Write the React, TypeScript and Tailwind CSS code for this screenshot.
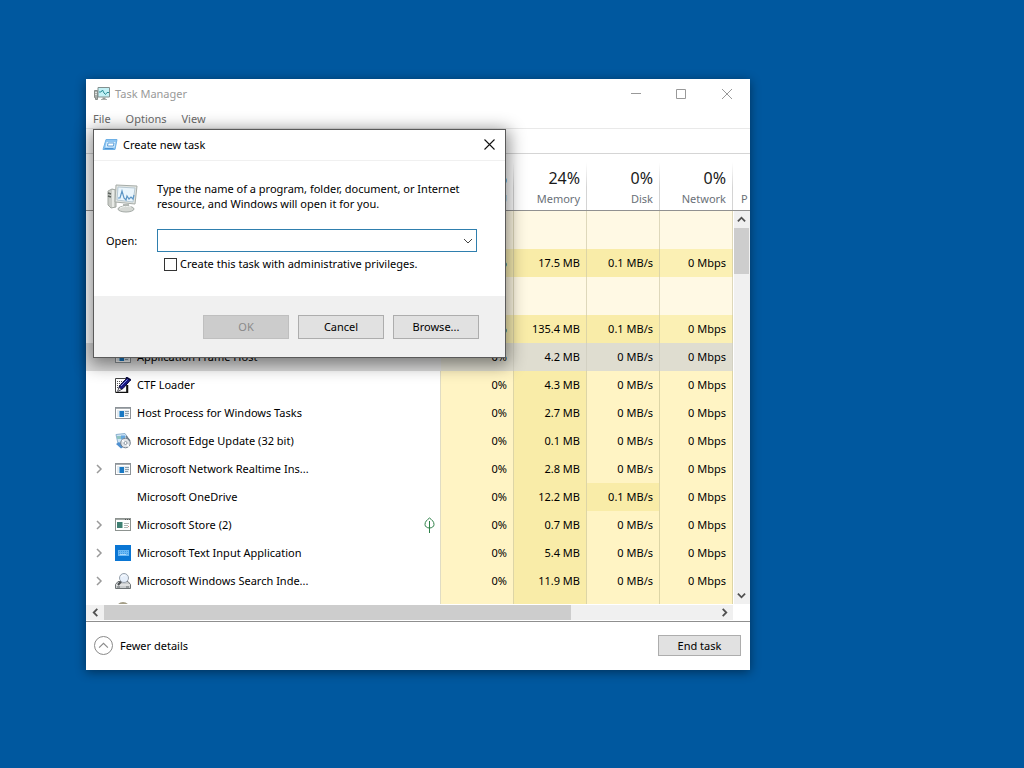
import { useState } from "react";
import type { ReactNode } from "react";

type Heat = "low" | "mid" | "high";

type Process = {
  id: string;
  name?: string;
  icon?: ReactNode;
  expandable?: boolean;
  suspended?: boolean;
  selected?: boolean;
  usage: [string, string, string, string];
  heat?: [Heat, Heat, Heat, Heat];
};

const HEAT: Record<Heat, string> = {
  low: "bg-[#fff4c4]",
  mid: "bg-[#fbf0b4]",
  high: "bg-[#f9eca8]",
};

const DEFAULT_HEAT: [Heat, Heat, Heat, Heat] = ["low", "high", "low", "low"];

function TaskManagerIcon({ className }: { className: string }) {
  return (
    <svg viewBox="0 0 32 32" className={className} aria-hidden>
      <path d="M2 9l4-2 4 1v17l-5 1-3-3z" fill="#c9ccc7" stroke="#a3a8a3" />
      <path d="M7 8v17" stroke="#e8eae6" strokeWidth="2" />
      <path d="M2 11l3 1M2 14l3 1" stroke="#5c625e" strokeWidth="1.5" />
      <path d="M10 3l21 1-2 18-20-2z" fill="#e3e6e2" stroke="#a6aca8" />
      <path d="M12 5l17 1-2 14-16-2z" fill="#eaf5fc" stroke="#b7c8d2" />
      <path
        d="M12 16l2 0 2-7 2 7 2 2 1-4 2 3 2-2 2 2 1-4"
        fill="none"
        stroke="#5f97c6"
        strokeWidth="1.2"
      />
      <path d="M17 22h6v3h-6z" fill="#b4b9b5" />
      <ellipse cx="20" cy="27" rx="8" ry="3" fill="#d5d8d4" stroke="#a3a9a5" />
      <path d="M14 26c3-2 8-2 11-1" fill="none" stroke="#f2f4f1" />
    </svg>
  );
}

function TitleMonitorIcon() {
  return (
    <svg viewBox="0 0 16 16" className="size-4" aria-hidden>
      <path d="M.5 4.5h3v9h-2v-2h-1z" fill="#a9aeac" stroke="#868c89" />
      <path d="M1 6.5h2M1 8.500h2" stroke="#dde0dd" />
      <path d="M4 1.5h11.5v9.5H4z" fill="#c3f1f6" stroke="#82908f" />
      <path d="M5 6h2l1.500-2L10 7l1.500 1.500L13 6.500h2" fill="none" stroke="#2d8f98" />
      <path d="M8.500 11.500h3v2h-3z" fill="#929895" />
      <path d="M7 13.500h6" stroke="#a9aeab" />
    </svg>
  );
}

function RunIcon() {
  return (
    <svg viewBox="0 0 16 16" className="size-4" aria-hidden>
      <path d="M4 2.500h11l-2 10H1z" fill="#8cc4f2" stroke="#6db0e6" />
      <path d="M4.500 5h9l-1 5.500h-9z" fill="#d8edfc" />
      <path d="M6 6h6l-.5 3H5.500z" fill="#fff" stroke="#5a9eda" />
      <path d="M2.500 11.500h9" stroke="#4a90d2" />
    </svg>
  );
}

function AppIcon() {
  return (
    <svg viewBox="0 0 16 16" className="size-4" shapeRendering="crispEdges" aria-hidden>
      <rect x=".5" y="2.5" width="15" height="11" fill="#fff" stroke="#8d9398" />
      <path d="M1 3.500h14" stroke="#a6abaf" />
      <rect x="2" y="5" width="12" height="7" fill="#e3ebf1" />
      <rect x="5" y="6" width="4" height="6" fill="#1979c4" />
      <rect x="4" y="6" width="1" height="6" fill="#7db5de" />
      <path d="M10 6.500h4M10 8.500h4M10 10.500h3" stroke="#8fa0ac" />
    </svg>
  );
}

function StoreIcon() {
  return (
    <svg viewBox="0 0 16 16" className="size-4" shapeRendering="crispEdges" aria-hidden>
      <rect x=".5" y="1.5" width="15" height="12" fill="#fff" stroke="#8d9390" />
      <path d="M1 2.500h14" stroke="#a2a8a5" />
      <path d="M10 2.500h1M12 2.500h1M14 2.500h1" stroke="#555" />
      <rect x="2" y="5" width="5" height="6" fill="#3f7f72" />
      <rect x="7" y="5" width="1" height="6" fill="#9dc2b8" />
      <path d="M9 6.500h5M9 8.500h4M9 10.500h4" stroke="#b0b6b3" />
      <path d="M13 9.500h1" stroke="#d98d84" />
    </svg>
  );
}

function CtfIcon() {
  return (
    <svg viewBox="0 0 16 16" className="size-4" aria-hidden>
      <path d="M.5 1.500h11v14H.5z" fill="#fff" stroke="#444" />
      <path d="M2 4.500h8M2 6.500h7M2 8.500h5M2 10.500h3" stroke="#555" strokeDasharray="1 1" />
      <path d="M12.500 8v7.500H1" fill="none" stroke="#111" strokeWidth="1.5" />
      <path d="M3 14l1.500-5L12 1l3.500 2L8 11.500z" fill="#1b1b86" stroke="#08083c" />
      <path d="M6 9l6.500-6.500" stroke="#8a96ea" />
      <path d="M2.500 14.500l1.500-4 2.500 2z" fill="#f1f1f1" stroke="#222" strokeWidth=".5" />
      <path d="M11 0l5 3" stroke="#08083c" strokeWidth="1.5" />
    </svg>
  );
}

function EdgeUpdateIcon() {
  return (
    <svg viewBox="0 0 16 16" className="size-4" aria-hidden>
      <path d="M1 1.500l9-1 2 3-1 8-8-1z" fill="#cfe4f5" stroke="#8db2d0" />
      <path d="M2 3h4v3H2z" fill="#8fc4c0" />
      <path d="M6 2.500h4v4H6z" fill="#65a7de" />
      <path d="M1 11l5 4.500 3-2L4 9z" fill="#4e8fd0" />
      <circle cx="10.5" cy="10" r="4.8" fill="#dfe3e7" stroke="#76808b" />
      <circle cx="10.5" cy="10" r="1.5" fill="#fff" stroke="#8b96a1" />
      <path d="M7 7l2 2M12 11.500l2 2" stroke="#fff" strokeWidth="1.5" />
      <path d="M11 3l4 5" stroke="#6f7b87" strokeWidth="1.5" />
    </svg>
  );
}

function TextInputIcon() {
  return (
    <svg viewBox="0 0 16 16" className="size-4" shapeRendering="crispEdges" aria-hidden>
      <rect width="16" height="16" fill="#0a76d4" />
      <rect x="3" y="5" width="11" height="6" fill="#69b7f4" />
      <path d="M4 6.500h9M4 8.500h9" stroke="#3f9be8" strokeDasharray="1 1" />
      <path d="M5 9.500h6" stroke="#a9d7fb" />
    </svg>
  );
}

function SearchIndexerIcon() {
  return (
    <svg viewBox="0 0 16 16" className="size-4" aria-hidden>
      <path d="M3 8.500h10l2.500 3v4H.5v-4z" fill="#c9cccd" stroke="#6d7274" />
      <path d="M1 12h14" stroke="#f6f6f6" />
      <path d="M2 14h3M11 14h3" stroke="#63686a" />
      <path d="M3 12l3.500-4" stroke="#4c5053" strokeWidth="2" />
      <circle cx="9" cy="5" r="4.5" fill="#e6effb" stroke="#98a1ac" />
      <path d="M6.500 4c1-2 3-2 4-1" fill="none" stroke="#fff" />
    </svg>
  );
}

function GearIcon() {
  return (
    <svg viewBox="0 0 16 16" className="size-4" aria-hidden>
      <circle cx="8" cy="8" r="6" fill="#f1eee4" stroke="#a39d86" strokeWidth="2" />
    </svg>
  );
}

function Chevron({
  direction,
  className,
  strokeWidth = 1,
}: {
  direction: "up" | "down" | "left" | "right";
  className: string;
  strokeWidth?: number;
}) {
  const paths = {
    up: "M1 7l4-4 4 4",
    down: "M1 3l4 4 4-4",
    left: "M7 1L3 5l4 4",
    right: "M3 1l4 4-4 4",
  };
  return (
    <svg viewBox="0 0 10 10" className={className} aria-hidden>
      <path d={paths[direction]} fill="none" stroke="currentColor" strokeWidth={strokeWidth} />
    </svg>
  );
}

const APPS: Process[] = [
  {
    id: "taskmgr",
    icon: <TitleMonitorIcon />,
    usage: ["0%", "17.5 MB", "0.1 MB/s", "0 Mbps"],
    heat: ["mid", "high", "high", "mid"],
  },
];

const BACKGROUND: Process[] = [
  {
    id: "antimalware",
    icon: <AppIcon />,
    usage: ["0%", "135.4 MB", "0.1 MB/s", "0 Mbps"],
    heat: ["mid", "high", "high", "mid"],
  },
  {
    id: "framehost",
    name: "Application Frame Host",
    icon: <AppIcon />,
    selected: true,
    usage: ["0%", "4.2 MB", "0 MB/s", "0 Mbps"],
  },
  { id: "ctf", name: "CTF Loader", icon: <CtfIcon />, usage: ["0%", "4.3 MB", "0 MB/s", "0 Mbps"] },
  {
    id: "taskhost",
    name: "Host Process for Windows Tasks",
    icon: <AppIcon />,
    usage: ["0%", "2.7 MB", "0 MB/s", "0 Mbps"],
  },
  {
    id: "edgeupdate",
    name: "Microsoft Edge Update (32 bit)",
    icon: <EdgeUpdateIcon />,
    usage: ["0%", "0.1 MB", "0 MB/s", "0 Mbps"],
  },
  {
    id: "nis",
    name: "Microsoft Network Realtime Ins...",
    icon: <AppIcon />,
    expandable: true,
    usage: ["0%", "2.8 MB", "0 MB/s", "0 Mbps"],
  },
  {
    id: "onedrive",
    name: "Microsoft OneDrive",
    usage: ["0%", "12.2 MB", "0.1 MB/s", "0 Mbps"],
    heat: ["low", "high", "high", "low"],
  },
  {
    id: "store",
    name: "Microsoft Store (2)",
    icon: <StoreIcon />,
    expandable: true,
    suspended: true,
    usage: ["0%", "0.7 MB", "0 MB/s", "0 Mbps"],
  },
  {
    id: "textinput",
    name: "Microsoft Text Input Application",
    icon: <TextInputIcon />,
    expandable: true,
    usage: ["0%", "5.4 MB", "0 MB/s", "0 Mbps"],
  },
  {
    id: "indexer",
    name: "Microsoft Windows Search Inde...",
    icon: <SearchIndexerIcon />,
    expandable: true,
    usage: ["0%", "11.9 MB", "0 MB/s", "0 Mbps"],
  },
  { id: "next", icon: <GearIcon />, usage: ["", "", "", ""] },
];

const COLUMNS = [
  { label: "CPU", total: "2%" },
  { label: "Memory", total: "24%" },
  { label: "Disk", total: "0%" },
  { label: "Network", total: "0%" },
];

function GroupRow({ title }: { title: string }) {
  return (
    <tr className="h-[38px]">
      <th scope="rowgroup" aria-label={title} className="border-r border-[#e0dcc4]" />
      {COLUMNS.map((column) => (
        <td key={column.label} className="border-r border-[#ded8bb] bg-[#fff9e4]" />
      ))}
      <td />
    </tr>
  );
}

function ProcessRow({ process }: { process: Process }) {
  const heat = process.heat ?? DEFAULT_HEAT;

  return (
    <tr className="h-7">
      <th
        scope="row"
        className={`border-r p-0 text-left font-normal ${process.selected ? "border-[#dedede] bg-[#dedede]" : "border-[#e0dcc4]"}`}
      >
        <div className="flex items-center pr-[5px] pl-2">
          <span className="w-[21px] shrink-0">
            {process.expandable ? (
              <button type="button" aria-label={`Expand ${process.name}`} className="block text-[#9a9a9a]">
                <Chevron direction="right" className="size-[10px]" strokeWidth={1.5} />
              </button>
            ) : null}
          </span>
          <span className="mr-[6px] size-4 shrink-0">{process.icon}</span>
          <span className="flex-1 truncate">{process.name}</span>
          {process.suspended ? (
            <svg viewBox="0 0 11 16" className="h-4 w-[11px]" role="img" aria-label="Suspended">
              <path
                d="M5.500 1C3 3 1 4.500 1 7.500c0 2 2 3.500 4.500 3.500S10 9.500 10 7.500C10 4.500 8 3 5.500 1zM5.500 4v12"
                fill="none"
                stroke="#2d8048"
              />
            </svg>
          ) : null}
        </div>
      </th>
      {process.usage.map((value, i) => (
        <td
          key={COLUMNS[i].label}
          className={`border-r p-0 pr-[6px] text-right ${process.selected ? "border-[#d3d1c3] bg-[#dfddd0]" : `border-[#ddd5a6] ${HEAT[heat[i]]}`}`}
        >
          {value}
        </td>
      ))}
      <td />
    </tr>
  );
}

function ProcessTable() {
  return (
    <div className="relative min-h-0 flex-1 overflow-hidden">
      <table className="w-full table-fixed border-separate border-spacing-0 whitespace-nowrap">
        <colgroup>
          <col />
          <col className="w-[73px]" />
          <col className="w-[73px]" />
          <col className="w-[73px]" />
          <col className="w-[73px]" />
          <col className="w-[17px]" />
        </colgroup>
        <thead>
          <tr className="h-[57px] text-[#6a7078]">
            <th scope="col" aria-label="Name" className="border-b border-[#919191]" />
            {COLUMNS.map((column) => (
              <th
                key={column.label}
                scope="col"
                className="border-b border-[#919191] bg-[linear-gradient(to_bottom,transparent_15%,#d4d4d4_60%)] bg-[length:1px_100%] bg-right bg-no-repeat p-0 pr-[7px] pb-px text-right align-bottom font-normal"
              >
                <span className="block text-[16px] leading-[22px] text-[#1a1a1a]">{column.total}</span>
                <span className="block leading-5">{column.label}</span>
              </th>
            ))}
            <th scope="col" className="border-b border-[#919191] p-0 pb-px pl-2 text-left align-bottom leading-5 font-normal">
              P
            </th>
          </tr>
        </thead>
        <tbody>
          <GroupRow title="Apps" />
          {APPS.map((process) => (
            <ProcessRow key={process.id} process={process} />
          ))}
          <GroupRow title="Background processes" />
          {BACKGROUND.map((process) => (
            <ProcessRow key={process.id} process={process} />
          ))}
        </tbody>
      </table>

      <div className="absolute top-[57px] right-0 bottom-0 flex w-4 flex-col bg-[#f0f0f0] pr-px text-[#505050]">
        <button type="button" aria-label="Scroll up" className="flex h-[17px] items-center justify-center">
          <Chevron direction="up" className="size-[9px]" strokeWidth={2} />
        </button>
        <div className="h-[46px] bg-[#cdcdcd]" />
        <button type="button" aria-label="Scroll down" className="mt-auto flex h-[17px] items-center justify-center">
          <Chevron direction="down" className="size-[9px]" strokeWidth={2} />
        </button>
      </div>
    </div>
  );
}

function TaskManagerWindow() {
  return (
    <section
      aria-label="Task Manager"
      className="absolute top-[79px] left-[86px] flex h-[591px] w-[664px] flex-col bg-white shadow-[0_2px_10px_rgba(0,0,0,0.45)]"
    >
      <header className="flex h-[29px] shrink-0 items-center pl-2 text-[#999]">
        <TitleMonitorIcon />
        <h1 className="ml-[5px] flex-1">Task Manager</h1>
        <button type="button" aria-label="Minimize" className="flex h-full w-[45px] items-center justify-center">
          <svg viewBox="0 0 10 10" className="size-[10px]" aria-hidden>
            <path d="M0 4.500h10" stroke="currentColor" />
          </svg>
        </button>
        <button type="button" aria-label="Maximize" className="flex h-full w-[46px] items-center justify-center">
          <svg viewBox="0 0 10 10" className="size-[10px]" aria-hidden>
            <path d="M.5.5h9v9h-9z" fill="none" stroke="currentColor" />
          </svg>
        </button>
        <button type="button" aria-label="Close" className="flex h-full w-[46px] items-center justify-center">
          <svg viewBox="0 0 10 10" className="size-[10px]" aria-hidden>
            <path d="M0 0l10 10M10 0L0 10" stroke="currentColor" />
          </svg>
        </button>
      </header>
      <nav className="flex h-[21px] shrink-0 items-center gap-[15px] border-b border-[#e9e9e9] pt-px pl-[7px] text-[#6a6a6a]">
        <button type="button">File</button>
        <button type="button">Options</button>
        <button type="button">View</button>
      </nav>
      <div className="h-[25px] shrink-0 border-b border-[#d5d5d5]" />

      <ProcessTable />

      <div className="mt-px mr-[17px] mb-px flex h-[15px] shrink-0 bg-[#f0f0f0] text-[#505050]">
        <button type="button" aria-label="Scroll left" className="flex w-[18px] items-center justify-center">
          <Chevron direction="left" className="size-[9px]" strokeWidth={2} />
        </button>
        <div className="w-[467px] bg-[#cdcdcd]" />
        <button type="button" aria-label="Scroll right" className="ml-auto flex w-[17px] items-center justify-center">
          <Chevron direction="right" className="size-[9px]" strokeWidth={2} />
        </button>
      </div>

      <footer className="flex h-[49px] shrink-0 items-center justify-between border-t border-[#8f8f8f] pr-[9px] pb-px pl-2">
        <button type="button" className="flex items-center gap-[7px]">
          <span className="flex size-[19px] items-center justify-center rounded-full border border-[#8a8a8a] text-[#8a8a8a]">
            <Chevron direction="up" className="size-[11px]" />
          </span>
          Fewer details
        </button>
        <button type="button" className="h-[21px] w-[83px] border border-[#adadad] bg-[#e1e1e1]">
          End task
        </button>
      </footer>
    </section>
  );
}

function CreateTaskDialog() {
  const [command, setCommand] = useState("");
  const [elevated, setElevated] = useState(false);

  return (
    <section
      role="dialog"
      aria-labelledby="dialog-title"
      className="absolute top-[129px] left-[93px] w-[413px] border border-[#5a5a5a] bg-white shadow-[0_4px_16px_3px_rgba(0,0,0,0.45)]"
    >
      <header className="flex h-[31px] items-center border-b border-[#f0f0f0] pb-px pl-2">
        <RunIcon />
        <h2 id="dialog-title" className="ml-[5px] flex-1">
          Create new task
        </h2>
        <button type="button" aria-label="Close" className="flex h-full w-[31px] items-center justify-center">
          <svg viewBox="0 0 11 11" className="size-[11px]" aria-hidden>
            <path d="M.5.5l10 10M10.500.5l-10 10" stroke="#111" strokeWidth="1.1" />
          </svg>
        </button>
      </header>

      <div className="h-[135px] pt-5 pr-7 pl-3">
        <div className="flex">
          <TaskManagerIcon className="mt-px mr-[19px] size-8 shrink-0" />
          <p className="leading-[15px]">
            Type the name of a program, folder, document, or Internet
            <br />
            resource, and Windows will open it for you.
          </p>
        </div>
        <div className="mt-[15px] flex items-center">
          <label htmlFor="open-command" className="w-[51px]">
            Open:
          </label>
          <div className="flex h-[23px] flex-1 border border-[#2f7fae]">
            <input
              id="open-command"
              type="text"
              value={command}
              onChange={(e) => setCommand(e.target.value)}
              className="min-w-0 flex-1 px-1 outline-none"
            />
            <button type="button" aria-label="Show recent commands" className="flex w-[17px] items-center justify-center text-[#444]">
              <Chevron direction="down" className="size-[10px]" />
            </button>
          </div>
        </div>
        <label className="mt-1 ml-[58px] flex items-center gap-[3px]">
          <input
            type="checkbox"
            checked={elevated}
            onChange={(e) => setElevated(e.target.checked)}
            className="size-[13px] appearance-none border border-[#333] bg-white checked:bg-[#333]"
          />
          Create this task with administrative privileges.
        </label>
      </div>

      <div className="flex h-[61px] items-center justify-end gap-[9px] bg-[#f0f0f0] pr-[26px]">
        <button type="button" disabled className="h-6 w-[86px] border border-[#bfbfbf] bg-[#cccccc] text-[#8a8a8a]">
          OK
        </button>
        <button type="button" className="h-6 w-[86px] border border-[#adadad] bg-[#e1e1e1]">
          Cancel
        </button>
        <button type="button" className="h-6 w-[86px] border border-[#adadad] bg-[#e1e1e1]">
          Browse...
        </button>
      </div>
    </section>
  );
}

export default function App() {
  return (
    <main className="relative min-h-screen overflow-hidden bg-[#00589f] font-['Noto_Sans','Open_Sans',sans-serif] text-[11px] leading-4 text-black">
      <TaskManagerWindow />
      <CreateTaskDialog />
    </main>
  );
}
